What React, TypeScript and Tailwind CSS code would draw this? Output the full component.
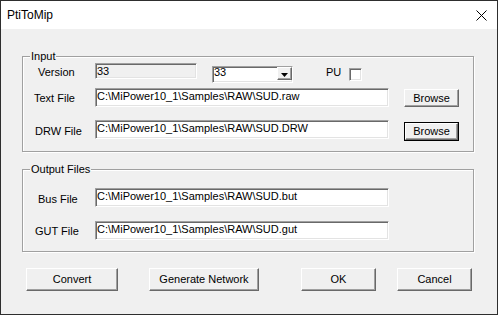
import React from "react";

const sunken =
  "box-border border border-t-[#a0a0a0] border-l-[#a0a0a0] border-r-white border-b-white shadow-[inset_1px_1px_0_#696969,inset_-1px_-1px_0_#e3e3e3]";
const raised =
  "box-border border border-t-white border-l-white border-r-[#696969] border-b-[#696969] shadow-[inset_-1px_-1px_0_#a0a0a0] bg-[#f0f0f0]";

function Group({ title, className, children }: { title: string; className: string; children: React.ReactNode }) {
  return (
    <div
      className={`relative box-border border border-[#a0a0a0] shadow-[inset_1px_1px_0_#fff,1px_1px_0_#fff] w-[452px] flex flex-col ${className}`}
    >
      <span className="absolute left-[7px] top-[-7px] px-[1px] bg-[#f0f0f0] leading-[13px] whitespace-nowrap">{title}</span>
      {children}
    </div>
  );
}

function TextField({ text }: { text: string }) {
  return (
    <div className={`${sunken} bg-white w-[294px] h-[19px] pl-[1px] pt-[1px] leading-[13px] whitespace-nowrap`}>{text}</div>
  );
}

function Btn({ label, className, isDefault }: { label: string; className: string; isDefault?: boolean }) {
  if (isDefault) {
    return (
      <div className={`box-border border border-black flex ${className}`}>
        <div className={`${raised} flex-1 flex items-center justify-center leading-[13px]`}>{label}</div>
      </div>
    );
  }
  return <div className={`${raised} flex items-center justify-center leading-[13px] ${className}`}>{label}</div>;
}

export default function App() {
  return (
    <div className="w-[498px] h-[315px] box-border border border-[#2e2e2e] bg-[#f0f0f0] flex flex-col font-['Liberation_Sans',Arial,sans-serif] text-[11px] text-black overflow-hidden">
      {/* Title bar */}
      <div className="h-[28px] bg-white flex items-center justify-between pl-[6px] pr-[10px] shrink-0">
        <span className="text-[12px] leading-[14px]">PtiToMip</span>
        <svg width="11" height="11" viewBox="0 0 11 11">
          <path d="M0.5 0.5 L10.5 10.5 M10.5 0.5 L0.5 10.5" stroke="#000" strokeWidth="1" fill="none" />
        </svg>
      </div>

      {/* Body */}
      <div className="flex flex-col pl-[21px]">
        <Group title="Input" className="mt-[27px] h-[96px]">
          {/* Row 1 */}
          <div className="flex items-start mt-[6px] h-[20px]">
            <div className="ml-[15px] w-[57px] mt-[3px] leading-[13px]">Version</div>
            <div className={`${sunken} bg-[#f0f0f0] w-[102px] h-[16px] pl-[1px] pt-[1px] leading-[13px]`}>33</div>
            <div className={`${sunken} bg-white ml-[15px] mt-[3px] w-[81px] h-[17px] flex`}>
              <div className="flex-1 pl-[1px] leading-[11px]">33</div>
              <div className={`${raised} w-[15px] h-[13px] flex items-center justify-center`}>
                <svg width="7" height="4" viewBox="0 0 7 4" className="mt-[2px]">
                  <polygon points="0,0 7,0 3.5,4" fill="#000" />
                </svg>
              </div>
            </div>
            <div className="ml-[33px] mt-[3px] leading-[13px]">PU</div>
            <div className={`${sunken} bg-white ml-[8px] mt-[5px] w-[13px] h-[13px]`} />
          </div>
          {/* Row 2 */}
          <div className="flex items-start mt-[5px] h-[19px]">
            <div className="ml-[11px] w-[61px] mt-[4px] leading-[13px] whitespace-nowrap">Text File</div>
            <TextField text="C:\MiPower10_1\Samples\RAW\SUD.raw" />
            <Btn label="Browse" className="ml-[15px] mt-[1px] w-[55px] h-[18px]" />
          </div>
          {/* Row 3 */}
          <div className="flex items-start mt-[13px] h-[20px]">
            <div className="ml-[12px] w-[60px] mt-[5px] leading-[13px] whitespace-nowrap">DRW File</div>
            <TextField text="C:\MiPower10_1\Samples\RAW\SUD.DRW" />
            <Btn label="Browse" isDefault className="ml-[15px] mt-[2px] w-[55px] h-[19px]" />
          </div>
        </Group>

        <Group title="Output Files" className="mt-[17px] h-[83px]">
          <div className="flex items-start mt-[18px] h-[19px]">
            <div className="ml-[15px] w-[57px] mt-[5px] leading-[13px] whitespace-nowrap">Bus File</div>
            <TextField text="C:\MiPower10_1\Samples\RAW\SUD.but" />
          </div>
          <div className="flex items-start mt-[14px] h-[19px]">
            <div className="ml-[12px] w-[60px] mt-[4px] leading-[13px] whitespace-nowrap">GUT File</div>
            <TextField text="C:\MiPower10_1\Samples\RAW\SUD.gut" />
          </div>
        </Group>

        {/* Buttons */}
        <div className="flex items-start mt-[16px]">
          <Btn label="Convert" className="ml-[4px] w-[92px] h-[23px]" />
          <Btn label="Generate Network" className="ml-[31px] w-[110px] h-[23px]" />
          <Btn label="OK" className="ml-[42px] w-[75px] h-[23px]" />
          <Btn label="Cancel" className="ml-[21px] w-[75px] h-[23px]" />
        </div>
      </div>
    </div>
  );
}
